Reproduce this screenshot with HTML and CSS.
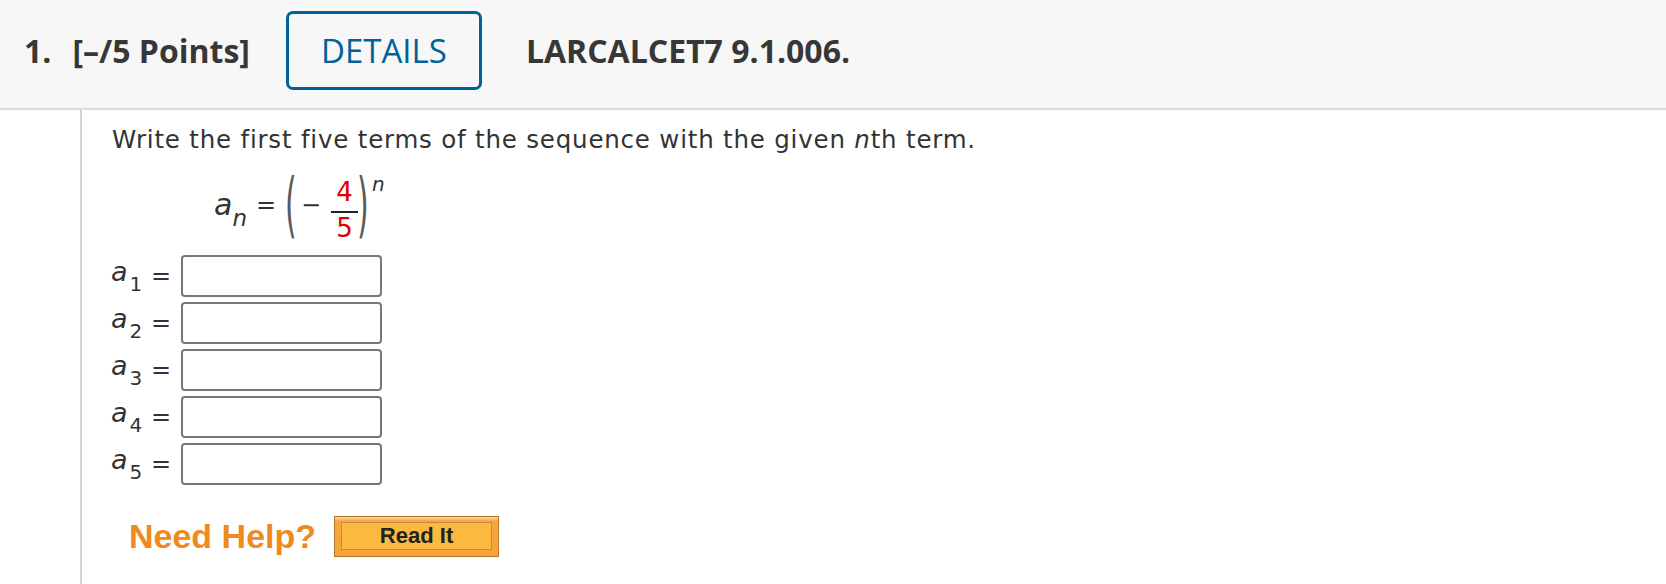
FILE: index.html
```html
<!DOCTYPE html>
<html>
<head>
<meta charset="utf-8">
<link rel="stylesheet" href="styles.css">
</head>
<body>
<div class="header">
  <span class="qnum">1.</span>
  <span class="points">[–/5 Points]</span>
  <button class="details">DETAILS</button>
  <span class="code">LARCALCET7 9.1.006.</span>
</div>
<div class="body">
  <div class="content">
    <p class="prompt">Write the first five terms of the sequence with the given <i>n</i>th term.</p>
    <div class="formula">
      <span class="fvar">a<sub class="fsub">n</sub></span>
      <span class="feq">=</span>
      <span class="paren lparen">(</span>
      <span class="minus">−</span>
      <span class="frac"><span class="num">4</span><span class="bar"></span><span class="den">5</span></span>
      <span class="paren rparen">)</span>
      <span class="fsup">n</span>
    </div>
    <div class="terms">
      <div class="term"><span class="tvar">a<sub class="tsub">1</sub></span><span class="teq">=</span><input class="answer" type="text"></div>
      <div class="term"><span class="tvar">a<sub class="tsub">2</sub></span><span class="teq">=</span><input class="answer" type="text"></div>
      <div class="term"><span class="tvar">a<sub class="tsub">3</sub></span><span class="teq">=</span><input class="answer" type="text"></div>
      <div class="term"><span class="tvar">a<sub class="tsub">4</sub></span><span class="teq">=</span><input class="answer" type="text"></div>
      <div class="term"><span class="tvar">a<sub class="tsub">5</sub></span><span class="teq">=</span><input class="answer" type="text"></div>
    </div>
    <div class="help">
      <span class="need">Need Help?</span>
      <button class="readit"><span class="readit-inner">Read It</span></button>
    </div>
  </div>
</div>
</body>
</html>
```

FILE: styles.css
```css
html, body {
  margin: 0;
  padding: 0;
  background: #ffffff;
}

body {
  font-family: "DejaVu Sans", Verdana, sans-serif;
  color: #333333;
}

.header {
  box-sizing: border-box;
  height: 110px;
  background: #f7f7f7;
  border-bottom: 2px solid #dddddd;
  display: flex;
  align-items: center;
  padding: 0 0 8px 24px;
  font-family: "Open Sans", sans-serif;
  font-size: 32px;
  color: #373737;
}

.qnum {
  font-weight: 700;
  margin-right: 21px;
}

.points {
  font-weight: 700;
}

.details {
  box-sizing: border-box;
  margin-left: 36px;
  width: 196px;
  height: 79px;
  border: 3px solid #00629b;
  border-radius: 7px;
  background: #f7f7f7;
  color: #00629b;
  font-family: "Open Sans", sans-serif;
  font-size: 33px;
  font-weight: 400;
  padding: 0;
}

.code {
  font-weight: 700;
  margin-left: 44px;
}

.body {
  display: flex;
}

.content {
  margin-left: 80px;
  border-left: 2px solid #d4d4d4;
  padding: 15px 0 0 30px;
  min-height: 474px;
  box-sizing: border-box;
  flex: 1;
}

.prompt {
  margin: 0;
  font-size: 24.5px;
  letter-spacing: 0.8px;
  line-height: 30px;
  color: #333333;
}

.prompt i {
  font-style: oblique;
}

.formula {
  display: flex;
  align-items: center;
  height: 62px;
  margin: 22px 0 0 102px;
  color: #333333;
}

.fvar {
  width: 42px;
  font-style: oblique;
  font-size: 30px;
  line-height: 30px;
  margin-bottom: 7px;
}

.fsub {
  font-size: 23px;
  line-height: 0;
  vertical-align: -11px;
}

.feq {
  width: 29px;
  font-size: 24px;
  margin-bottom: 6px;
}

.paren {
  display: inline-block;
  font-size: 30px;
  line-height: 30px;
  color: #5a5a5a;
  font-weight: 400;
  transform: scaleY(2.4);
  margin-bottom: 6px;
}

.lparen {
  width: 16px;
}

.rparen {
  width: 15px;
  margin-left: -1px;
}

.minus {
  width: 30px;
  font-size: 24px;
  margin-bottom: 6px;
}

.frac {
  display: flex;
  flex-direction: column;
  align-items: center;
  width: 27px;
  margin-top: 4px;
}

.num, .den {
  color: #e00000;
  font-size: 26px;
  line-height: 26px;
}

.bar {
  width: 27px;
  height: 2px;
  background: #222222;
  margin: 6px 0 2px;
}

.fsup {
  font-style: oblique;
  font-size: 20px;
  line-height: 20px;
  align-self: flex-start;
  margin-top: -3px;
}

.terms {
  display: flex;
  flex-direction: column;
  gap: 5px;
  margin-top: 16px;
}

.term {
  display: flex;
  align-items: center;
  height: 42px;
}

.tvar {
  width: 40px;
  font-style: oblique;
  font-size: 27px;
  line-height: 1;
  color: #333333;
  margin-left: -1px;
}

.tsub {
  font-style: normal;
  font-size: 20px;
  vertical-align: -10px;
  margin-left: 2px;
}

.teq {
  font-size: 24px;
  width: 30px;
  color: #333333;
}

.answer {
  box-sizing: border-box;
  width: 201px;
  height: 42px;
  border: 2px solid #777777;
  border-radius: 4px;
  background: #ffffff;
  margin: 0;
  padding: 0;
}

.help {
  display: flex;
  align-items: center;
  margin-top: 31px;
  padding-left: 17px;
}

.need {
  font-family: "Liberation Sans", Arial, sans-serif;
  font-weight: 700;
  font-size: 34px;
  color: #ef8a1f;
}

.readit {
  box-sizing: border-box;
  margin-left: 18px;
  width: 165px;
  height: 41px;
  padding: 5px 6px 6px;
  border: 1px solid #b4772f;
  background: linear-gradient(#fcd6a0 0, #f8a443 4px, #f7a13a 100%);
  display: flex;
}

.readit-inner {
  flex: 1;
  display: flex;
  align-items: center;
  justify-content: center;
  border: 1px solid #c98a3e;
  background: #fbb940;
  font-family: "Liberation Sans", Arial, sans-serif;
  font-weight: 700;
  font-size: 22px;
  color: #222222;
}
```
